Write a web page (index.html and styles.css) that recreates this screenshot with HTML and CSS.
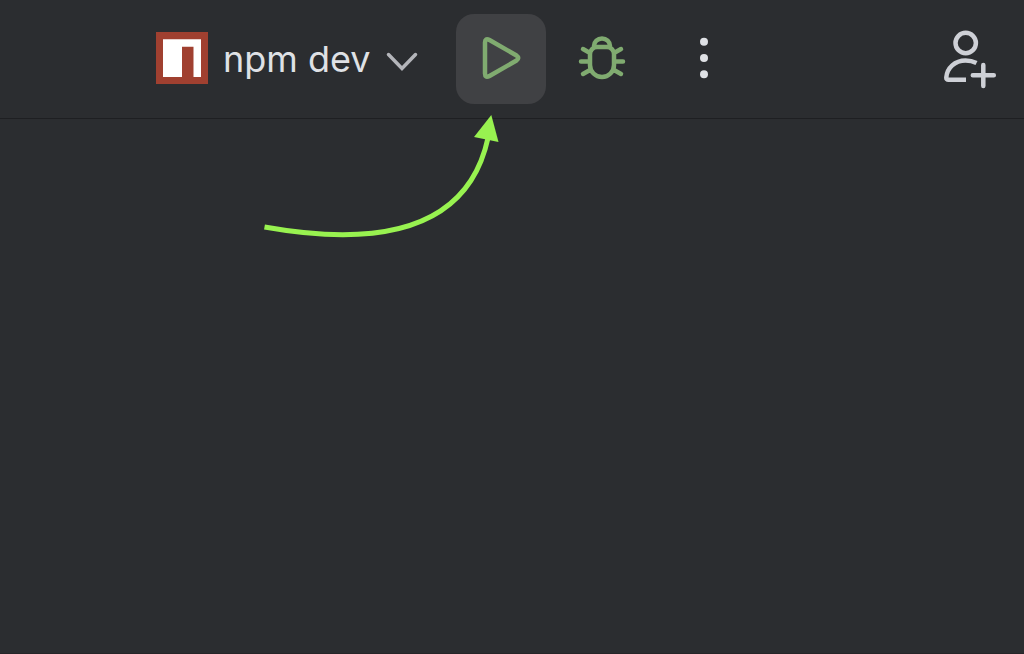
FILE: index.html
```html
<!DOCTYPE html>
<html lang="en">
<head>
<meta charset="utf-8">
<title>npm dev</title>
<link rel="stylesheet" href="styles.css">
</head>
<body>
<div class="window">
  <header class="toolbar">
    <div class="run-tools">
      <button class="config" type="button">
        <svg class="npm-logo" viewBox="0 0 52 52" aria-hidden="true">
          <path fill="#a04030" d="M0 0h52v52H0z"/>
          <path fill="#fff" d="M7 7.300h38v37.700h-7.500V14.700H26V45H7z"/>
        </svg>
        <span class="config-name">npm dev</span>
        <svg class="chevron" viewBox="0 0 32 20" aria-hidden="true">
          <path d="M2.500 2.500 16 16.500 29.500 2.500"/>
        </svg>
      </button>
      <button class="tool tool-active" type="button" aria-label="Run">
        <svg class="icon icon-green" viewBox="0 0 60 60" aria-hidden="true">
          <path d="M14 26V13.500Q14 8.500 18.500 11L45.500 26.500Q49 29 45.500 31.500L18.500 47Q14 49.500 14 44.500Z"/>
        </svg>
      </button>
      <button class="tool" type="button" aria-label="Debug">
        <svg class="icon icon-green" viewBox="0 0 60 60" aria-hidden="true">
          <path d="M22 18v-1a8 7.500 0 0 1 16 0v1M25 18h10a7 7 0 0 1 7 7v11a12 12 0 0 1-24 0V25a7 7 0 0 1 7-7zM11 20l7 4M9 32.500h8M11 45l7-4M49 20l-7 4M51 32.500h-8M49 45l-7-4"/>
        </svg>
      </button>
      <button class="tool" type="button" aria-label="More actions">
        <svg class="icon icon-dots" viewBox="0 0 60 60" aria-hidden="true">
          <circle cx="31" cy="12.700" r="4"/><circle cx="31" cy="29" r="4"/><circle cx="31" cy="45.200" r="4"/>
        </svg>
      </button>
    </div>
    <button class="tool" type="button" aria-label="Invite user">
      <svg class="icon icon-light" viewBox="0 0 60 60" aria-hidden="true">
        <circle cx="25.700" cy="14" r="10.200"/>
        <path d="M36.500 34Q31.500 31.500 25.500 31.500C15 31.500 7 39 6.300 48.500Q6.200 50.800 8.500 50.800H26"/>
        <path stroke-linecap="round" d="M43.300 36v21M32.800 46.200h21"/>
      </svg>
    </button>
  </header>
  <main class="editor"></main>
  <svg class="arrow" viewBox="0 0 240 126" aria-hidden="true">
    <path class="arrow-line" d="M2.500 114Q199 149 226 25"/>
    <path class="arrow-head" d="M229.300 2 236.500 29 212 24z"/>
  </svg>
</div>
</body>
</html>
```
FILE: styles.css
```css
* {
  box-sizing: border-box;
}

body {
  margin: 0;
  background: #2b2d30;
  color: #dfe1e5;
  font-family: Inter, "Liberation Sans", sans-serif;
}

.window {
  position: relative;
  display: flex;
  flex-direction: column;
  min-height: 100vh;
  border-bottom: 1px solid #262528;
}

.toolbar {
  display: flex;
  align-items: center;
  justify-content: space-between;
  padding: 14px 9px 14px 156px;
  border-bottom: 1px solid #1e1f22;
}

.run-tools {
  display: flex;
  align-items: center;
  gap: 11px;
}

button {
  border: 0;
  padding: 0;
  background: none;
  color: inherit;
  font: inherit;
}

.config {
  display: flex;
  align-items: center;
  gap: 15px;
  margin-right: 27px;
}

.npm-logo {
  width: 52px;
  height: 52px;
  margin-bottom: 2px;
}

.config-name {
  font-size: 36px;
  line-height: 48px;
}

.chevron {
  width: 32px;
  height: 20px;
  margin-top: 6px;
  fill: none;
  stroke: #b4b5ba;
  stroke-width: 3.5;
  stroke-linecap: round;
}

.tool {
  display: flex;
  align-items: center;
  justify-content: center;
  width: 90px;
  height: 90px;
  border-radius: 18px;
}

.tool-active {
  background: #404144;
}

.icon {
  width: 60px;
  height: 60px;
  fill: none;
  stroke-width: 4.5;
}

.icon-green {
  stroke: #80ab70;
  stroke-linecap: round;
  stroke-linejoin: round;
}

.icon-light {
  stroke: #ced0d6;
}

.icon-dots {
  fill: #dfe1e5;
}

.editor {
  flex: 1;
}

.arrow {
  position: absolute;
  top: 113px;
  left: 262px;
  width: 240px;
  height: 126px;
  pointer-events: none;
}

.arrow-line {
  fill: none;
  stroke: #98f250;
  stroke-width: 5;
}

.arrow-head {
  fill: #98f250;
}
```
